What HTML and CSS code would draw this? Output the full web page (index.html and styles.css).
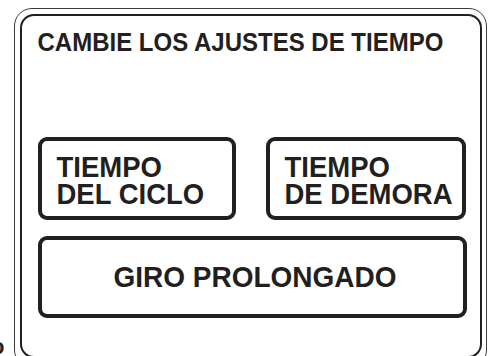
FILE: index.html
```html
<!DOCTYPE html>
<html>
<head>
  <title>Ajustes de tiempo</title>
  <meta name="viewport" content="width=device-width, initial-scale=1.0">
  <link rel="stylesheet" href="styles.css">
</head>
<body>
  <span class="edge-mark">o</span>
  <div class="bezel">
    <div class="screen">
      <h1 class="title">CAMBIE LOS AJUSTES DE TIEMPO</h1>
      <div class="keys">
        <div class="key key-left"><span class="label">TIEMPO<br>DEL CICLO</span></div>
        <div class="key key-left"><span class="label">TIEMPO<br>DE DEMORA</span></div>
        <div class="key key-wide"><span class="label">GIRO PROLONGADO</span></div>
      </div>
    </div>
  </div>
</body>
</html>
```

FILE: styles.css
```css
html, body {
  margin: 0;
  padding: 0;
  background: #fff;
  overflow: hidden;
}

body {
  width: 494px;
  height: 356px;
  display: flex;
  align-items: flex-start;
  font-family: "Liberation Sans", Arial, Helvetica, sans-serif;
  font-weight: bold;
  color: #231f20;
}

.edge-mark {
  align-self: flex-end;
  width: 14px;
  margin-bottom: -2px;
  font-size: 22px;
  line-height: 22px;
  text-indent: -9px;
  overflow: hidden;
}

.bezel {
  margin-top: 8px;
  width: 473px;
  height: 360px;
  border: 1px solid #3a3a3a;
  border-radius: 18px;
  padding: 5px 4px 0 5px;
  box-sizing: border-box;
}

.screen {
  height: 340px;
  border: 2.5px solid #231f20;
  border-radius: 14px;
  padding: 0 14px 0 15.5px;
  display: flex;
  flex-direction: column;
}

.title {
  margin: 12px 0 0 0;
  font-size: 24px;
  line-height: 30px;
  white-space: nowrap;
  transform: scaleY(1.05);
  transform-origin: left center;
}

.keys {
  margin-top: 79px;
  display: grid;
  grid-template-columns: 198px 200px;
  column-gap: 30px;
  row-gap: 16px;
}

.key {
  border: 4px solid #231f20;
  border-radius: 9px;
  box-sizing: border-box;
  height: 83px;
  font-size: 27.5px;
  line-height: 26px;
  display: flex;
  align-items: center;
}

.label {
  display: block;
  transform: scaleY(1.05);
}

.key-left {
  padding: 4px 0 0 15px;
}

.key-wide {
  grid-column: 1 / 3;
  width: 429px;
  height: 82px;
  font-size: 28px;
  justify-content: center;
  padding: 2px 0 0 6px;
}
```
